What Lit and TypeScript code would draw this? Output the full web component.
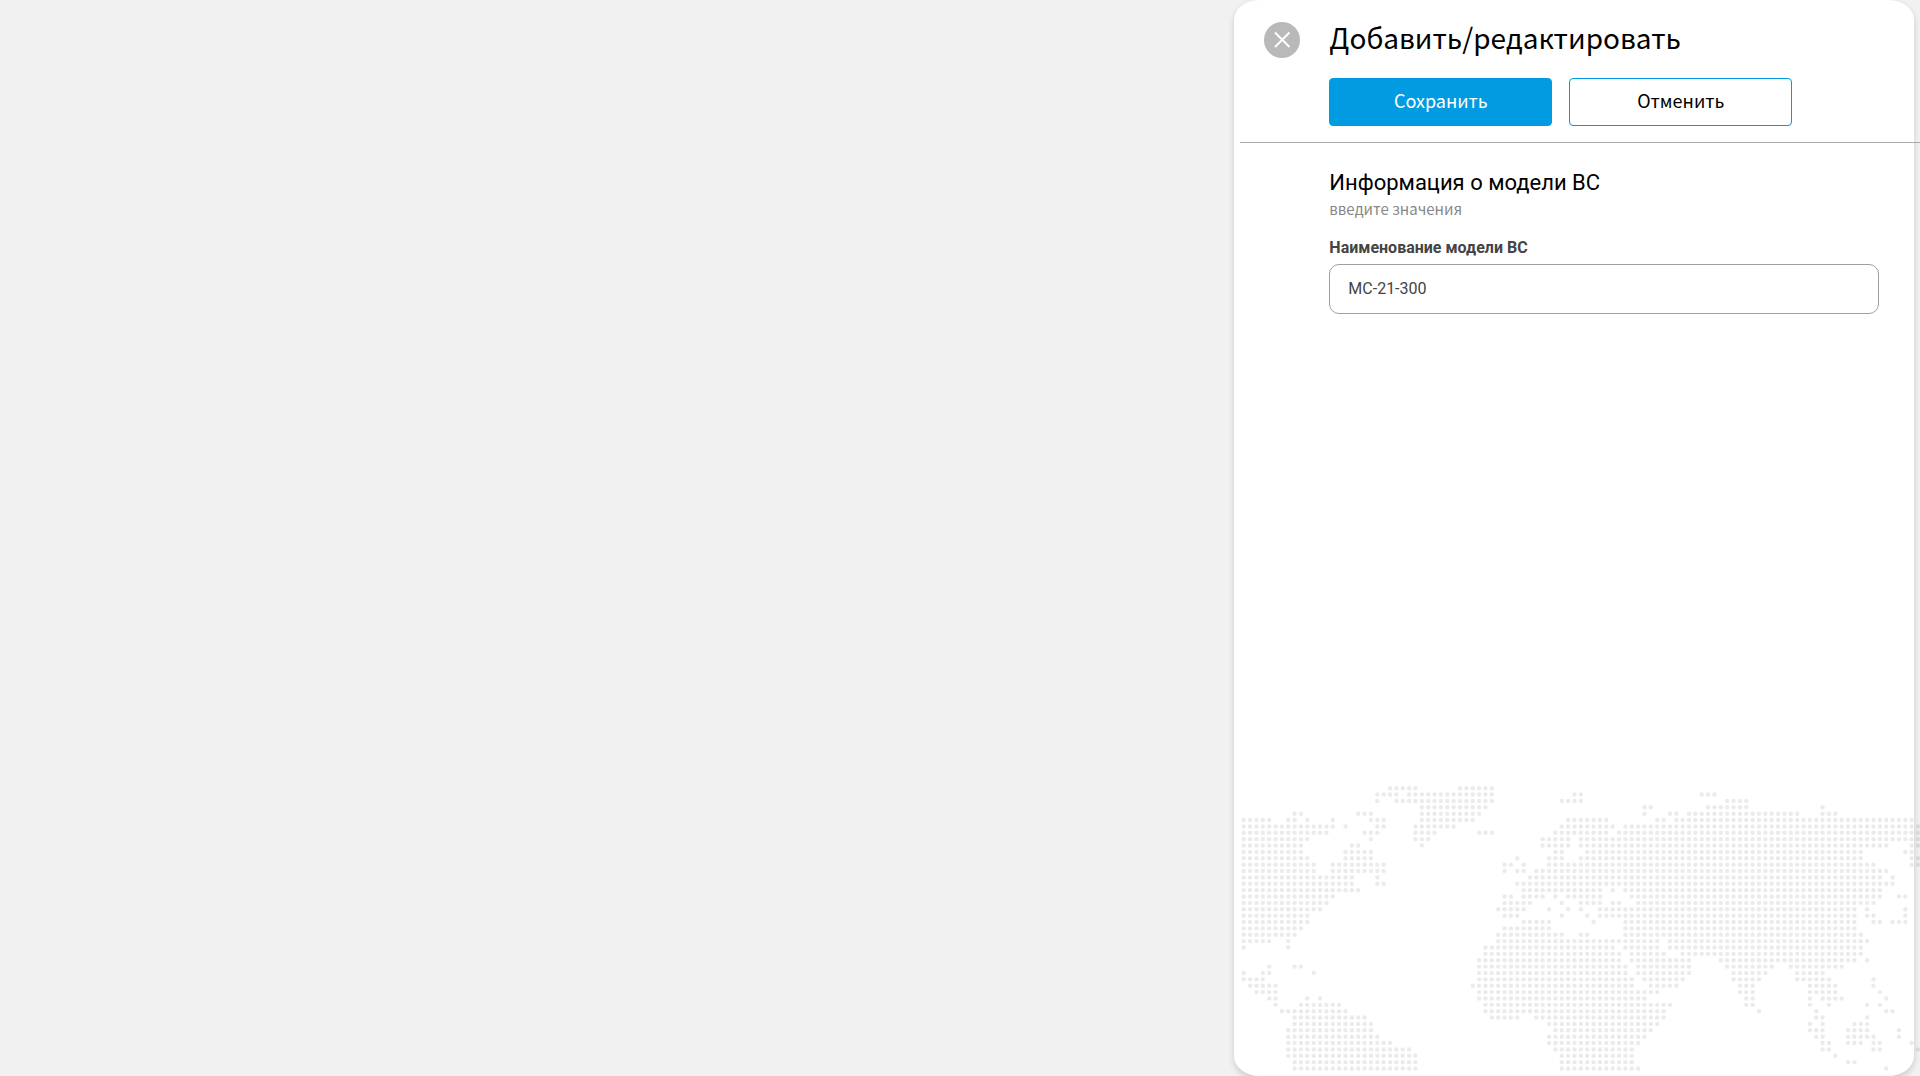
import { LitElement, html, svg, css } from "lit";
import { customElement, state } from "lit/decorators.js";

/** Dotted world map: one string per row, each listing the filled columns as single cells or ranges. */
const MAP_ROWS: string[] = [
  "23-27,34-39",
  "21-24,26-39,52-53,72-74",
  "21,24-39,50-53,76-79",
  "28-38,63-64,73-79,91",
  "8-9,18-20,28-37,63,67-68,70-87,91-93",
  "0-4,7-8,10,14,20-22,28-36,51-57,65-66,68-105",
  "0-14,16,21-22,27-33,50-58,60-106",
  "0-13,19-21,27-30,37-39,49-57,59-106",
  "0-10,20,27-29,47-51,53-106",
  "0-9,17-18,28,47-51,53-101,105-106",
  "0-9,16-20,49-50,54-97,104-105",
  "0-10,16-20,43,48-50,53-97,105-106",
  "0-11,14-22,41-42,44,48-99,105-106",
  "0-11,14-22,41,43-44,46-101",
  "0-17,21,45-100,102",
  "0-17,21-22,43-102",
  "0-18,44-56,58,60-100",
  "0-14,41-42,44-47,49,51-56,61-100,103-104",
  "0-13,41-45,50,53-56,58-59,62-99",
  "0-12,40-44,48,51,53,56-96,98,104",
  "0-10,41-43,50,54,56-96,98-99,104",
  "0-10,44-48,55,60-96,99-100,102-104",
  "0-9,41-48,60-96",
  "0-8,40-50,53-54,60-97",
  "0-4,7,40-65,67-98",
  "0,7,38-58,60-65,67-97",
  "38-59,61-66,69-97",
  "37-59,61-70,75-96,98",
  "4,8-9,37-60,62-70,76-83,86-94",
  "0,3-4,11,37-60,62-70,77-82,87-91",
  "0-3,37-61,63-69,77-81,87-92,99",
  "1-5,36-61,64-68,78-80,89-93,99",
  "2-5,37-65,78-80,89-93,100",
  "4-5,10,12,37-63,79-80,89,91-94,101",
  "5,9-15,38-67,79-80,89,92,98,100",
  "6-16,38-66,81,90,101-102",
  "8-19,39-43,46-66,90-91,98",
  "8-20,48-65,89,91,96-98",
  "7-20,49-64,89-91,95-98,103",
  "7-21,48-63,90-91,95-99,103",
  "7-23,48-62,91-92,95-97,99-100,105",
  "7-26,49-61,91-92,99-100,106",
  "7-27,50-61,93",
  "8-27,50-61,95-96",
  "8-27,50-62,101",
];

const MAP_DOTS: [number, number][] = MAP_ROWS.flatMap((row, y) =>
  row.split(",").flatMap((run) => {
    const [from, to = from] = run.split("-").map(Number);
    return Array.from({ length: to - from + 1 }, (_, i): [number, number] => [from + i, y]);
  })
);

@customElement("world-map")
export class WorldMap extends LitElement {
  static styles = css`
    :host {
      display: block;
    }
    .map {
      display: block;
      width: 100%;
      height: auto;
      fill: #000;
      fill-opacity: 0.08;
    }
  `;

  render() {
    return html`
      <svg class="map" viewBox="0 0 6795 2880" aria-hidden="true">
        ${MAP_DOTS.map(([x, y]) => svg`<circle cx=${37 + x * 63.6} cy=${32 + y * 63.7} r="22"></circle>`)}
      </svg>
    `;
  }
}

@customElement("app-root")
export class AppRoot extends LitElement {
  static styles = css`
    :host {
      display: flex;
      min-height: 100vh;
      background: #f1f1f1;
      color: #000;
      font-family: "Noto Sans CJK SC", "Noto Sans", sans-serif;
    }
    * {
      box-sizing: border-box;
    }
    .panel {
      display: flex;
      flex-direction: column;
      width: 35.4%;
      margin: 0 6px 0 auto;
      background: #fff;
      border-radius: 26px / 20px;
      box-shadow: 0 3px 6px rgba(0, 0, 0, 0.16);
    }
    .sheet {
      display: flex;
      flex-direction: column;
      flex: 1;
      margin: 0 -6px 0 6px;
    }
    .head,
    .body {
      display: grid;
      grid-template-columns: 36px 1fr;
      column-gap: 29px;
      padding: 0 41px 0 24px;
    }
    .head {
      padding-top: 18px;
      padding-bottom: 16px;
      border-bottom: 1px solid #aaa;
      row-gap: 16px;
      align-items: center;
    }
    .close {
      display: block;
      width: 36px;
      height: 36px;
      padding: 0;
      border: 0;
      border-radius: 50%;
      background: #b9b9b9;
      cursor: pointer;
    }
    .close svg {
      display: block;
      width: 36px;
      height: 36px;
      fill: none;
      stroke: #fff;
      stroke-width: 2;
    }
    .title {
      margin: 0;
      padding-bottom: 6px;
      font-size: 28px;
      font-weight: 400;
      line-height: 38px;
    }
    .actions {
      grid-column: 2;
      display: flex;
      gap: 17px;
    }
    .button {
      flex: 0 1 223px;
      height: 48px;
      padding: 0 0 4px;
      border: 1px solid #009be1;
      border-radius: 4px;
      background: #fff;
      color: #000;
      font-family: inherit;
      font-size: 18px;
      cursor: pointer;
    }
    .primary {
      background: #009be1;
      color: #fff;
    }
    .body {
      padding-top: 24px;
      font-family: Roboto, sans-serif;
    }
    .fields {
      grid-column: 2;
      display: flex;
      flex-direction: column;
    }
    .section {
      margin: 0;
      font-size: 22px;
      font-weight: 400;
      line-height: 32px;
    }
    .hint {
      margin: 0;
      color: #888;
      font-family: "Noto Sans CJK SC", "Noto Sans", sans-serif;
      font-size: 15px;
      line-height: 20px;
    }
    .label {
      margin: 17px 0 4px;
      color: #444;
      font-size: 16px;
      font-weight: 700;
      line-height: 24px;
    }
    .input {
      width: 100%;
      height: 50px;
      padding: 0 18px 2px;
      border: 1px solid #a0a0a0;
      border-radius: 10px;
      background: #fff;
      color: #444;
      font-family: inherit;
      font-size: 16px;
    }
    .map {
      margin-top: auto;
      padding-bottom: 3px;
    }
  `;

  @state() private model = "МС-21-300";

  private onInput(e: Event) {
    this.model = (e.target as HTMLInputElement).value;
  }

  render() {
    return html`
      <aside class="panel">
        <form class="sheet" @submit=${(e: Event) => e.preventDefault()}>
          <header class="head">
            <button class="close" type="button" aria-label="Закрыть">
              <svg viewBox="0 0 36 36" aria-hidden="true"><path d="M11 10.5 25.5 25M25.5 10.5 11 25" /></svg>
            </button>
            <h1 class="title">Добавить/редактировать</h1>
            <div class="actions">
              <button class="button primary" type="submit">Сохранить</button>
              <button class="button" type="button">Отменить</button>
            </div>
          </header>
          <section class="body">
            <div class="fields">
              <h2 class="section">Информация о модели ВС</h2>
              <p class="hint">введите значения</p>
              <label class="label" for="model">Наименование модели ВС</label>
              <input class="input" id="model" type="text" .value=${this.model} @input=${this.onInput} />
            </div>
          </section>
          <world-map class="map"></world-map>
        </form>
      </aside>
    `;
  }
}
